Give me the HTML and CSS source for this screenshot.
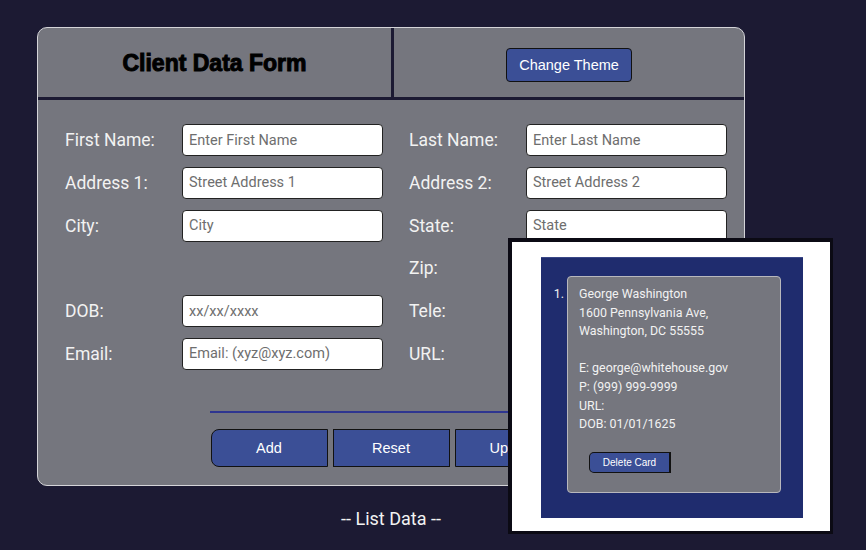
FILE: index.html
```html
<!DOCTYPE html>
<html>
<head>
    <title>Client Data Form</title>
    <link rel="stylesheet" href="styles.css">
</head>
<body>
    <div class="card">
        <div class="card-header">
            <h1 class="title">Client Data Form</h1>
            <div class="theme-cell">
                <button class="btn theme-btn" type="button">Change Theme</button>
            </div>
        </div>
        <form class="form-body">
            <div class="form-grid">
                <label for="firstName">First Name:</label>
                <input type="text" id="firstName" placeholder="Enter First Name">
                <label class="right" for="lastName">Last Name:</label>
                <input type="text" id="lastName" placeholder="Enter Last Name">

                <label for="address1">Address 1:</label>
                <input type="text" id="address1" placeholder="Street Address 1">
                <label class="right" for="address2">Address 2:</label>
                <input type="text" id="address2" placeholder="Street Address 2">

                <label for="city">City:</label>
                <input type="text" id="city" placeholder="City">
                <label class="right" for="state">State:</label>
                <input type="text" id="state" placeholder="State">

                <div></div>
                <div></div>
                <label class="right" for="zip">Zip:</label>
                <input type="text" id="zip" placeholder="Zip">

                <label for="dob">DOB:</label>
                <input type="text" id="dob" placeholder="xx/xx/xxxx">
                <label class="right" for="tele">Tele:</label>
                <input type="text" id="tele" placeholder="(xxx) xxx-xxxx">

                <label for="email">Email:</label>
                <input type="text" id="email" placeholder="Email: (xyz@xyz.com)">
                <label class="right" for="url">URL:</label>
                <input type="text" id="url" placeholder="URL">
            </div>
            <div class="actions">
                <div class="actions-line"></div>
                <div class="actions-buttons">
                    <button class="btn action first" type="button">Add</button>
                    <button class="btn action" type="button">Reset</button>
                    <button class="btn action last" type="button">Update</button>
                </div>
            </div>
        </form>
    </div>

    <p class="list-title">-- List Data --</p>

    <div class="list-popup">
        <div class="list-panel">
            <ol class="client-list">
                <li class="client-card">
                    <p>George Washington<br>
                    1600 Pennsylvania Ave,<br>
                    Washington, DC 55555</p>
                    <p>E: george@whitehouse.gov<br>
                    P: (999) 999-9999<br>
                    URL:<br>
                    DOB: 01/01/1625</p>
                    <button class="btn delete-btn" type="button">Delete Card</button>
                </li>
            </ol>
        </div>
    </div>
</body>
</html>
```

FILE: styles.css
```css
body {
    margin: 0;
    background-color: #1c1a33;
    font-family: Roboto, "Liberation Sans", sans-serif;
    color: #f2f2f2;
}
.card {
    width: 706px;
    margin: 27px 0 0 37px;
    background-color: #75767e;
    border: 1px solid #d4d4d8;
    border-radius: 10px;
}
.card-header {
    display: grid;
    grid-template-columns: 356px 1fr;
    height: 69px;
    border-bottom: 3px solid #1c1a33;
}
.title {
    margin: 0;
    display: flex;
    align-items: center;
    justify-content: center;
    border-right: 3px solid #1c1a33;
    font-family: "Liberation Sans", Arial, sans-serif;
    font-size: 23px;
    font-weight: bold;
    color: #000;
    -webkit-text-stroke: 1px #000;
    padding-top: 1px;
}
.theme-cell {
    display: flex;
    align-items: center;
    justify-content: center;
    padding-top: 5px;
}
.btn {
    background-color: #3b4f96;
    color: #fff;
    border: 1px solid #111;
    font-family: "Liberation Sans", Arial, sans-serif;
    cursor: pointer;
}
.theme-btn {
    width: 126px;
    height: 34px;
    font-size: 14.5px;
    border-radius: 4px;
}
.form-body {
    padding: 24px 17px 18px 27px;
}
.form-grid {
    display: grid;
    grid-template-columns: 117px 201px 143px 201px;
    grid-auto-rows: 32px;
    row-gap: 10.8px;
    align-items: center;
}
.form-grid label {
    font-size: 17.5px;
}
.form-grid label.right {
    padding-left: 26px;
}
.form-grid input {
    height: 32px;
    box-sizing: border-box;
    padding: 0 6px;
    border: 1px solid #222;
    border-radius: 4px;
    background-color: #fff;
    font-family: Roboto, "Liberation Sans", sans-serif;
    font-size: 14.5px;
    color: #333;
}
.form-grid input::placeholder {
    color: #6e6e6e;
}
.actions {
    display: flex;
    flex-direction: column;
    align-items: center;
    margin-top: 41px;
    padding-right: 10px;
}
.actions-line {
    width: 362px;
    height: 2px;
    background-color: #2e3590;
}
.actions-buttons {
    display: flex;
    gap: 5px;
    margin-top: 16px;
}
.action {
    width: 117px;
    height: 38px;
    font-size: 14.5px;
}
.action.first {
    border-radius: 8px 0 0 8px;
}
.action.last {
    border-radius: 0 8px 8px 0;
}
.list-title {
    width: 708px;
    margin: 22px 0 0 37px;
    text-align: center;
    font-size: 18px;
}
.list-popup {
    position: absolute;
    left: 508px;
    top: 238px;
    width: 325px;
    height: 296px;
    box-sizing: border-box;
    padding: 15px 0 0 29px;
    background-color: #fff;
    border: 4px solid #0b0a14;
    border-right-width: 3px;
    border-bottom-width: 3px;
}
.list-panel {
    width: 262px;
    height: 261px;
    background-color: #1f2c6e;
    border-top: 1px solid #3a4787;
    box-sizing: border-box;
    padding-top: 18px;
}
.client-list {
    margin: 0;
    padding-left: 26px;
    font-size: 12.4px;
}
.client-card {
    width: 201px;
    height: 207px;
    padding: 8px 0 0 11px;
    background-color: #75767e;
    border: 1px solid #b8b8bd;
    border-radius: 4px;
    line-height: 18.6px;
}
.client-card::marker {
    color: #f2f2f2;
}
.client-card p {
    margin: 0 0 18.6px 0;
}
.delete-btn {
    margin: 0 0 0 10px;
    width: 82px;
    height: 21px;
    font-size: 10px;
    border-radius: 5px 0 0 5px;
    border-width: 1px 2px 1px 1px;
}
```
